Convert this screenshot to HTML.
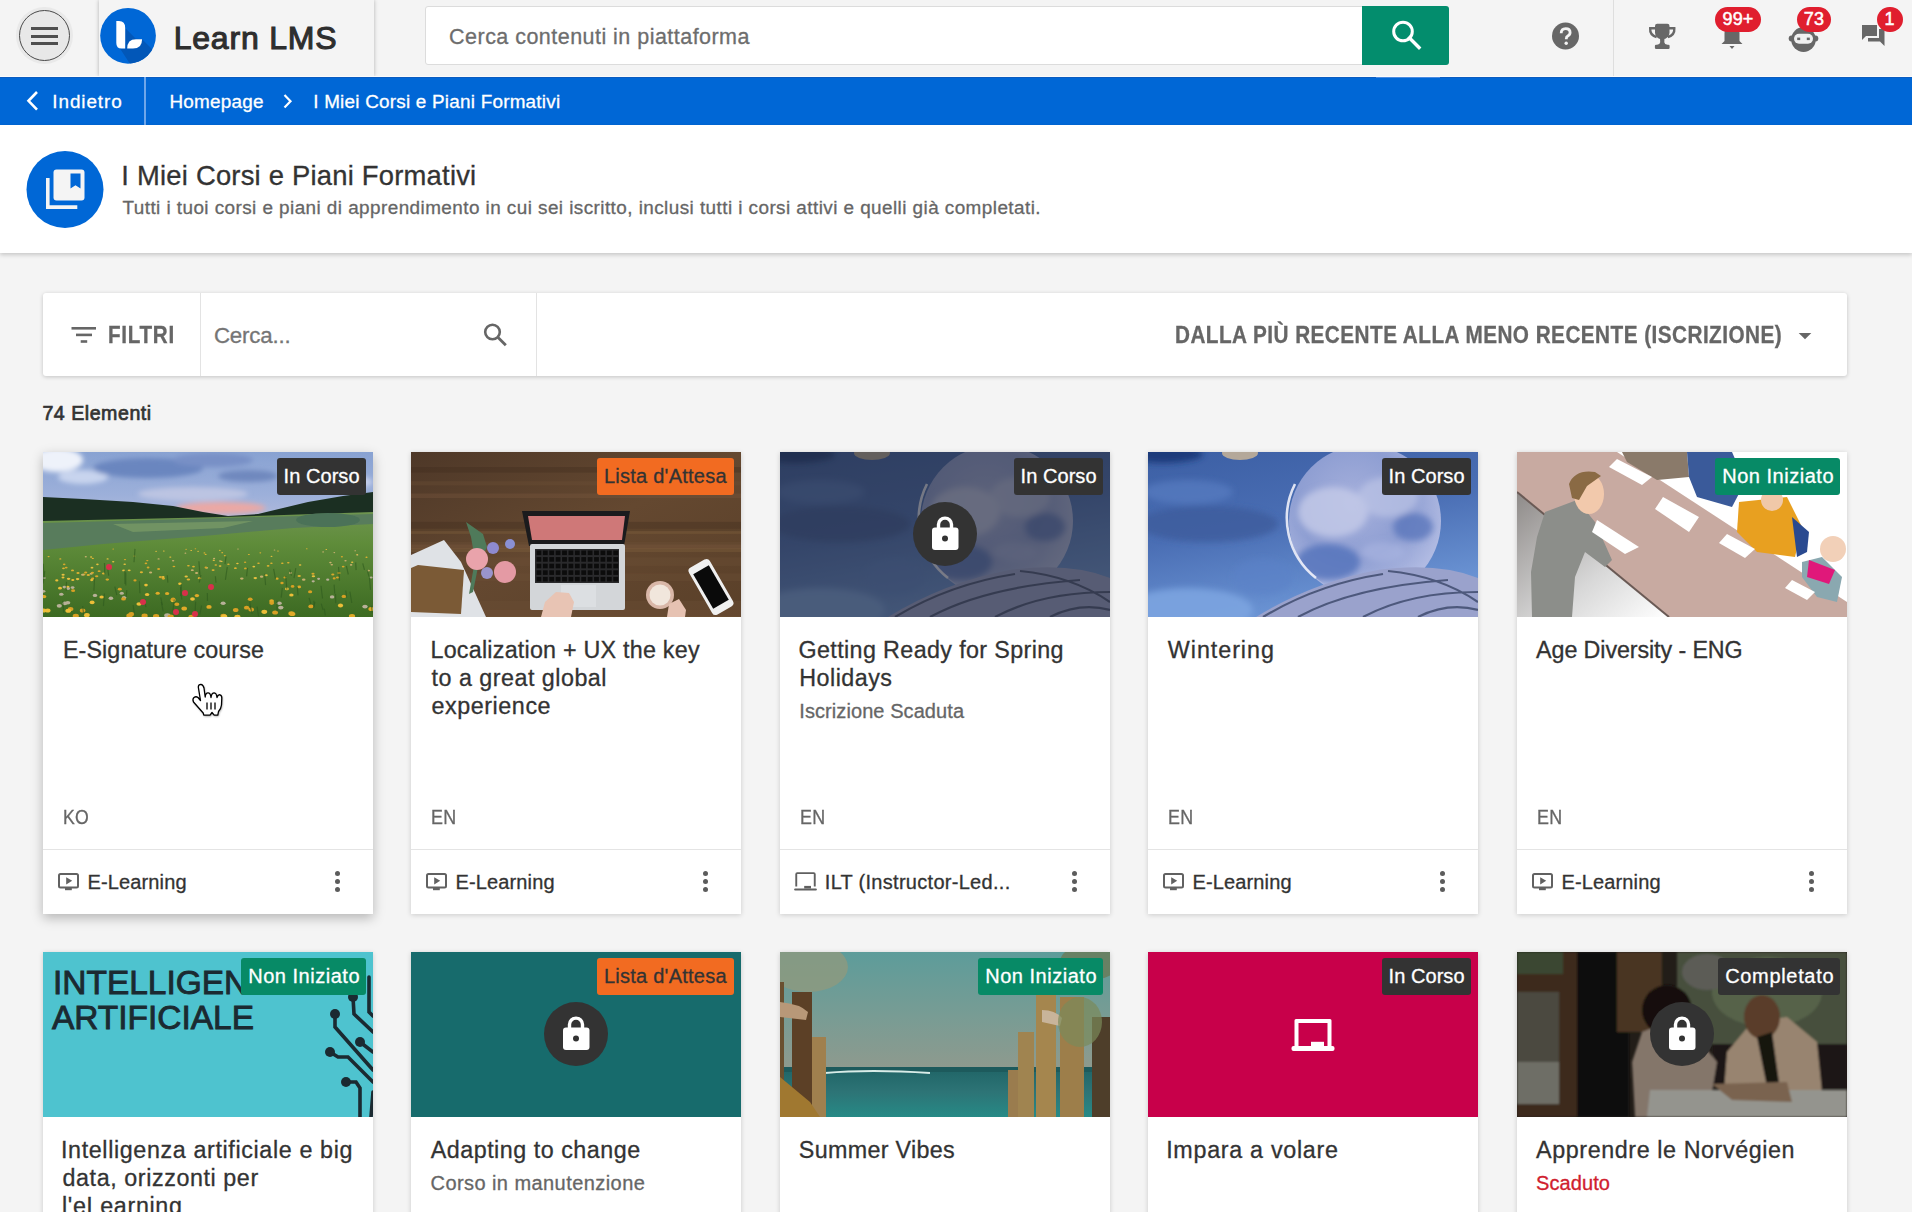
<!DOCTYPE html>
<html><head><meta charset="utf-8"><title>I Miei Corsi e Piani Formativi</title>
<style>
*{box-sizing:border-box;margin:0;padding:0}
html,body{width:1912px;height:1212px;overflow:hidden;background:#f4f4f4;font-family:"Liberation Sans", sans-serif;color:#333}
.abs{position:absolute}
.t{position:absolute;white-space:nowrap;line-height:1;-webkit-text-stroke-width:0.3px}
#hdr{position:absolute;left:0;top:0;width:1912px;height:77px;background:#f4f4f4}
#crumb{position:absolute;left:0;top:77px;width:1912px;height:48px;background:#0067d6}
#phead{position:absolute;left:0;top:125px;width:1912px;height:128px;background:#fff;box-shadow:0 2px 4px rgba(0,0,0,.18)}
#fbar{position:absolute;left:43px;top:293px;width:1804px;height:83px;background:#fff;border-radius:3px;box-shadow:0 1px 4px rgba(0,0,0,.2)}
.card{position:absolute;width:330px;height:462px;background:#fff;box-shadow:0 1px 5px rgba(0,0,0,.17)}
.card .img{position:absolute;left:0;top:0;width:330px;height:165px;overflow:hidden}
.card .img svg{position:absolute;left:0;top:0}
.badge{position:absolute;top:6px;right:6.6px;height:37px;border-radius:3px}
.b-dark{background:#333}
.b-green{background:#078a66}
.b-orange{background:#f26b21;color:#333}
.ttl{position:absolute;left:19px;top:184px;font-size:22px;line-height:28px;letter-spacing:.75px;color:#333;white-space:nowrap}
.sub{position:absolute;left:19px;font-size:18px;line-height:22px;letter-spacing:.7px;color:#666;white-space:nowrap}
.lang{position:absolute;left:19px;top:355px;font-size:18px;line-height:22px;letter-spacing:.6px;color:#666}
.div{position:absolute;left:0;top:397px;width:330px;height:1px;background:#e4e4e4}
.ftxt{position:absolute;left:45px;top:419px;font-size:19px;line-height:22px;letter-spacing:.45px;color:#333;white-space:nowrap}
.ficon{position:absolute;left:15px;top:421px}
.dots{position:absolute;left:292px;top:419px;width:5px;height:21px}
.dots i{position:absolute;left:0;width:5px;height:5px;border-radius:50%;background:#5c5c5c}
.lockc{position:absolute;left:133px;top:50px;width:64px;height:64px;border-radius:50%;background:#333}
</style></head><body>
<div id="hdr"><div class="abs" style="left:16px;top:7px;width:57px;height:57px;border-radius:50%;background:#e9e9e9"></div><div class="abs" style="left:19px;top:10px;width:51px;height:51px;border-radius:50%;background:#e8e8e8;border:1.3px solid #4a4a4a"></div><div class="abs" style="left:31px;top:27.3px;width:27px;height:2.7px;background:#4f4f4f"></div><div class="abs" style="left:31px;top:34.9px;width:27px;height:2.7px;background:#4f4f4f"></div><div class="abs" style="left:31px;top:42.4px;width:27px;height:2.7px;background:#4f4f4f"></div><div class="abs" style="left:99px;top:0;width:275px;height:76px;background:#f4f4f4;box-shadow:0 0 4px rgba(0,0,0,.28)"></div><svg class="abs" style="left:98px;top:6px" width="60" height="60" viewBox="0 0 60 60">
<defs><clipPath id="lc"><circle cx="30.05" cy="29.85" r="27.85"/></clipPath></defs>
<circle cx="30.05" cy="29.85" r="27.85" fill="#0067d6"/>
<g clip-path="url(#lc)"><path d="M27.2 22 L37.5 32.5 L44.1 33.2 L62 51 L50 64 L36 64 L22 42.6 L27.2 42.6Z" fill="#0257b8"/></g>
<path d="M18.3 15.1 H21 Q27.2 15.1 27.2 22 V42.6 H23.5 Q18.3 42.6 18.3 37 Z" fill="#fff"/>
<path d="M29.2 42.6 Q29.2 33.2 38 33.2 H44.1 Q44.1 42.6 35 42.6 Z" fill="#fff"/>
</svg><div class="t" style="left:173.70px;top:22.41px;font-size:32px;font-weight:400;color:#2e2e2e;letter-spacing:0.789px;-webkit-text-stroke:1.1px #2e2e2e;">Learn LMS</div><div class="abs" style="left:425px;top:6px;width:940px;height:59px;background:#fff;border:1px solid #dcdcdc;border-radius:3px"></div><div class="t" style="left:449.10px;top:26.80px;font-size:21.5px;font-weight:400;color:#6d6d6d;letter-spacing:0.467px;">Cerca contenuti in piattaforma</div><div class="abs" style="left:1362px;top:6px;width:87px;height:59px;background:#038d6d;border-radius:0 3px 3px 0"></div><svg class="abs" style="left:1388px;top:18px" width="36" height="34" viewBox="0 0 36 34">
<circle cx="15" cy="13.5" r="9.3" fill="none" stroke="#fff" stroke-width="3"/>
<path d="M21.5 20 L31 29.5" stroke="#fff" stroke-width="3.4" stroke-linecap="square"/></svg><svg class="abs" style="left:1551px;top:22px" width="29" height="29" viewBox="0 0 29 29">
<circle cx="14.5" cy="14" r="13.5" fill="#676767"/>
<path d="M10.2 11.2 q0 -4.6 4.5 -4.6 q4.4 0 4.4 4 q0 2.3 -2.3 3.5 q-1.5 .8 -1.5 2.6 v.6" fill="none" stroke="#f4f4f4" stroke-width="2.8"/>
<circle cx="15.2" cy="21.3" r="1.7" fill="#f4f4f4"/></svg><div class="abs" style="left:1613px;top:0;width:1px;height:77px;background:#dedede"></div><svg class="abs" style="left:1648px;top:23px" width="29" height="27" viewBox="0 0 29 27">
<path d="M7 3 q0 -2.2 2.2 -2.2 h10.1 q2.2 0 2.2 2.2 v6.5 q0 6.2 -7.25 6.8 q-7.25 -0.6 -7.25 -6.8 Z" fill="#676767"/>
<path d="M7.5 5.3 h-5.3 q-0.6 6.6 6.4 8.8" fill="none" stroke="#676767" stroke-width="2.4"/>
<path d="M21 5.3 h5.3 q0.6 6.6 -6.4 8.8" fill="none" stroke="#676767" stroke-width="2.4"/>
<path d="M12 15 h4.5 l-0.2 4.2 q0.2 2.3 3.2 2.8 h-10.5 q3 -0.5 3.2 -2.8Z" fill="#676767"/>
<rect x="6.9" y="21.8" width="14.7" height="4.2" rx="1.2" fill="#676767"/></svg><svg class="abs" style="left:1719px;top:22px" width="26" height="28" viewBox="0 0 26 28">
<path d="M13 2 q7.5 0 7.5 9 v8 l3 3 h-21 l3 -3 v-8 q0 -9 7.5 -9Z" fill="#676767"/>
<path d="M10.5 24 h5 l-2.5 3Z" fill="#676767"/></svg><svg class="abs" style="left:1787px;top:25px" width="33" height="28" viewBox="0 0 33 28">
<ellipse cx="16.5" cy="14.5" rx="12.3" ry="12.5" fill="#676767"/>
<ellipse cx="4.3" cy="13.5" rx="2.6" ry="3" fill="#676767"/>
<ellipse cx="28.7" cy="13.5" rx="2.6" ry="3" fill="#676767"/>
<rect x="7" y="8.8" width="19" height="10" rx="5" fill="#f0f0f0"/>
<rect x="10.2" y="12.6" width="3" height="2.5" fill="#676767"/><rect x="19.8" y="12.6" width="3" height="2.5" fill="#676767"/></svg><svg class="abs" style="left:1861px;top:23px" width="25" height="25" viewBox="0 0 25 25">
<path d="M1 2 h15 v11 h-11 l-4 4Z" fill="#676767"/>
<path d="M18 6 h5.5 v17 l-4.5 -4.5 h-12 v-3.5 h11Z" fill="#676767"/></svg><div class="abs" style="left:1715px;top:7px;width:46px;height:25px;border-radius:12.5px;background:#e01e2e;color:#fff;font-size:18px;line-height:25px;text-align:center;letter-spacing:.2px;-webkit-text-stroke:0.5px #fff">99+</div><div class="abs" style="left:1797px;top:7px;width:34px;height:25px;border-radius:12.5px;background:#e01e2e;color:#fff;font-size:18px;line-height:25px;text-align:center;letter-spacing:.2px;-webkit-text-stroke:0.5px #fff">73</div><div class="abs" style="left:1876.5px;top:7px;width:26px;height:25px;border-radius:12.5px;background:#e01e2e;color:#fff;font-size:18px;line-height:25px;text-align:center;letter-spacing:.2px;-webkit-text-stroke:0.5px #fff">1</div><div class="abs" style="left:0;top:76px;width:1912px;height:1px;background:#fbfbfb"></div></div><div id="crumb"><div class="abs" style="left:0;top:0;width:1912px;height:1px;background:#0b5cc0"></div><div class="abs" style="left:1376px;top:0;width:64px;height:1px;background:#4a8ae0"></div><svg class="abs" style="left:24px;top:13px" width="18" height="22" viewBox="0 0 18 22"><path d="M13 2 L4.5 10.8 L13 19.6" fill="none" stroke="#fff" stroke-width="2.6"/></svg><div class="abs" style="left:144px;top:0;width:2px;height:48px;background:#6ea6ea"></div><svg class="abs" style="left:280px;top:15px" width="16" height="20" viewBox="0 0 16 20"><path d="M4.5 3 L10.5 9.2 L4.5 15.4" fill="none" stroke="#fff" stroke-width="2.2"/></svg></div><div class="t" style="left:52.30px;top:92.60px;font-size:18.9px;font-weight:400;color:#fff;letter-spacing:0.914px;-webkit-text-stroke:0.3px #fff;">Indietro</div><div class="t" style="left:169.40px;top:92.60px;font-size:18.9px;font-weight:400;color:#fff;letter-spacing:0.256px;-webkit-text-stroke:0.3px #fff;">Homepage</div><div class="t" style="left:313.20px;top:92.60px;font-size:18.9px;font-weight:400;color:#fff;letter-spacing:0.225px;-webkit-text-stroke:0.3px #fff;">I Miei Corsi e Piani Formativi</div><div id="phead"></div><svg class="abs" style="left:25.5px;top:151px" width="78" height="78" viewBox="0 0 78 78">
<circle cx="39" cy="38.5" r="38.5" fill="#0067d6"/>
<path d="M20 27 h3.6 v27.3 h27.7 v3.6 h-31.3Z" fill="#f4f4f4"/>
<rect x="27.5" y="18.5" width="31" height="31" rx="3" fill="#f4f4f4"/>
<path d="M44.5 22.5 h10 v15 l-5 -3.2 l-5 3.2Z" fill="#0067d6"/>
</svg><div class="t" style="left:121.30px;top:161.91px;font-size:27.4px;font-weight:400;color:#333;letter-spacing:0.219px;">I Miei Corsi e Piani Formativi</div><div class="t" style="left:122.50px;top:198.60px;font-size:18.9px;font-weight:400;color:#666;letter-spacing:0.440px;">Tutti i tuoi corsi e piani di apprendimento in cui sei iscritto, inclusi tutti i corsi attivi e quelli già completati.</div><div id="fbar"><div class="abs" style="left:157px;top:0;width:1px;height:83px;background:#e3e3e3"></div><div class="abs" style="left:493px;top:0;width:1px;height:83px;background:#e3e3e3"></div></div><svg class="abs" style="left:71px;top:326px" width="26" height="18" viewBox="0 0 26 18">
<rect x="0.5" y="1" width="24.5" height="2.6" fill="#666"/><rect x="5" y="7.6" width="16" height="2.6" fill="#666"/><rect x="9.7" y="14.2" width="6.5" height="2.6" fill="#666"/></svg><div class="t" style="left:107.71px;top:323.76px;font-size:23.2px;font-weight:700;color:#666;letter-spacing:0.800px;transform:scaleX(0.8894);transform-origin:0 0;">FILTRI</div><div class="t" style="left:213.90px;top:324.52px;font-size:22.3px;font-weight:400;color:#757575;letter-spacing:-0.195px;">Cerca...</div><svg class="abs" style="left:482px;top:322px" width="28" height="26" viewBox="0 0 28 26">
<circle cx="10.5" cy="10" r="7.3" fill="none" stroke="#666" stroke-width="2.6"/>
<path d="M15.8 15.3 L23.8 23.3" stroke="#666" stroke-width="2.8"/></svg><div class="t" style="left:1174.91px;top:323.76px;font-size:23.2px;font-weight:700;color:#666;letter-spacing:0.500px;transform:scaleX(0.8949);transform-origin:0 0;">DALLA PIÙ RECENTE ALLA MENO RECENTE (ISCRIZIONE)</div><svg class="abs" style="left:1798px;top:331px" width="16" height="10" viewBox="0 0 16 10"><path d="M0.7 2 h12.6 l-6.3 6.3Z" fill="#666"/></svg><div class="t" style="left:42.40px;top:404.41px;font-size:19.6px;font-weight:400;color:#333;letter-spacing:0.528px;-webkit-text-stroke:0.7px #333;">74 Elementi</div><div class="card" style="left:43px;top:452px;box-shadow:0 4px 11px rgba(0,0,0,.26);"><div class="img"><svg width="330" height="165" viewBox="0 0 330 165"><defs><linearGradient id="m_sky" x1="0" y1="0" x2="0" y2="1"><stop offset="0" stop-color="#88a2d2"/><stop offset=".6" stop-color="#9db0da"/><stop offset="1" stop-color="#b4bcdc"/></linearGradient>
<linearGradient id="m_fg" x1="0" y1="0" x2="0" y2="1"><stop offset="0" stop-color="#6e9450"/><stop offset=".3" stop-color="#5f8c3a"/><stop offset="1" stop-color="#3c6a22"/></linearGradient>
<filter id="m_bl" x="-10%" y="-10%" width="120%" height="120%"><feGaussianBlur stdDeviation="2.5"/></filter></defs><rect width="330" height="72" fill="url(#m_sky)"/><g filter="url(#m_bl)"><ellipse cx="14" cy="8" rx="26" ry="12" fill="#eef2fa"/><ellipse cx="40" cy="25" rx="25" ry="7" fill="#c8d4ee"/><ellipse cx="105" cy="16" rx="55" ry="10" fill="#6b86bf"/><ellipse cx="170" cy="8" rx="40" ry="7" fill="#7890c6"/><ellipse cx="205" cy="24" rx="30" ry="6" fill="#6f88be"/><ellipse cx="290" cy="30" rx="40" ry="8" fill="#c6d0ec"/><ellipse cx="150" cy="42" rx="55" ry="7" fill="#bcc4e2"/><ellipse cx="178" cy="56" rx="45" ry="6" fill="#eba8a4"/></g><path d="M0 45 L40 47 L90 50 L130 54 L160 60 L185 64 L215 62 L240 56 L265 50 L300 44 L330 40 L330 68 L260 68 L180 69 L0 73Z" fill="#1b2f22"/><path d="M0 69 L180 65 L330 60 L330 165 L0 165Z" fill="url(#m_fg)"/><path d="M0 71 L180 66 L330 62 L330 72 L250 76 L160 84 L60 92 L0 98Z" fill="#587c5c"/><path d="M70 72 L210 69 L180 76 L90 80Z" fill="#7c9c66" opacity=".7"/><ellipse cx="285" cy="68" rx="32" ry="7" fill="#4b7258"/><ellipse cx="49.8" cy="106.4" rx="1.1" ry="0.7" fill="#e0b232"/><ellipse cx="176.8" cy="98.3" rx="0.9" ry="0.5" fill="#e8c040"/><ellipse cx="300.2" cy="114.6" rx="1.4" ry="0.9" fill="#d8a82c"/><ellipse cx="143.1" cy="97.2" rx="0.8" ry="0.5" fill="#e0b232"/><ellipse cx="181.8" cy="103.7" rx="1.0" ry="0.6" fill="#e0b232"/><ellipse cx="40.9" cy="122.5" rx="1.6" ry="1.0" fill="#d8a82c"/><ellipse cx="192.4" cy="116.2" rx="1.4" ry="0.9" fill="#e0b232"/><ellipse cx="130.9" cy="114.5" rx="1.4" ry="0.8" fill="#d8a82c"/><ellipse cx="283.3" cy="97.5" rx="0.8" ry="0.5" fill="#e8c040"/><ellipse cx="178.4" cy="109.4" rx="1.2" ry="0.7" fill="#e8c040"/><ellipse cx="225.1" cy="113.9" rx="1.4" ry="0.8" fill="#e0b232"/><ellipse cx="210.8" cy="114.6" rx="1.4" ry="0.9" fill="#e8c040"/><ellipse cx="235.0" cy="99.1" rx="0.9" ry="0.5" fill="#e0b232"/><ellipse cx="163.8" cy="115.8" rx="1.4" ry="0.9" fill="#c8b070"/><ellipse cx="153.6" cy="120.9" rx="1.6" ry="1.0" fill="#c8b070"/><ellipse cx="82.0" cy="107.6" rx="1.2" ry="0.7" fill="#d8a82c"/><ellipse cx="80.6" cy="118.4" rx="1.5" ry="0.9" fill="#e8c040"/><ellipse cx="288.8" cy="112.8" rx="1.3" ry="0.8" fill="#c8b070"/><ellipse cx="323.5" cy="105.2" rx="1.1" ry="0.7" fill="#e0b232"/><ellipse cx="54.4" cy="112.4" rx="1.3" ry="0.8" fill="#e8c040"/><ellipse cx="161.4" cy="100.9" rx="0.9" ry="0.6" fill="#e0b232"/><ellipse cx="25.6" cy="126.8" rx="1.8" ry="1.1" fill="#e8c040"/><ellipse cx="115.6" cy="106.9" rx="1.1" ry="0.7" fill="#c8b070"/><ellipse cx="150.5" cy="114.6" rx="1.4" ry="0.9" fill="#e0b232"/><ellipse cx="156.5" cy="126.2" rx="1.8" ry="1.1" fill="#e0b232"/><ellipse cx="231.5" cy="97.9" rx="0.8" ry="0.5" fill="#c8b070"/><ellipse cx="127.3" cy="105.1" rx="1.1" ry="0.7" fill="#e8c040"/><ellipse cx="152.4" cy="96.7" rx="0.8" ry="0.5" fill="#d8a82c"/><ellipse cx="162.9" cy="115.5" rx="1.4" ry="0.9" fill="#d8a82c"/><ellipse cx="42.7" cy="120.6" rx="1.6" ry="1.0" fill="#d8a82c"/><ellipse cx="302.5" cy="108.7" rx="1.2" ry="0.7" fill="#c8b070"/><ellipse cx="148.2" cy="98.6" rx="0.9" ry="0.5" fill="#e8c040"/><ellipse cx="270.4" cy="124.3" rx="1.7" ry="1.0" fill="#e8c040"/><ellipse cx="325.5" cy="118.6" rx="1.5" ry="0.9" fill="#c8b070"/><ellipse cx="49.8" cy="126.6" rx="1.8" ry="1.1" fill="#d8a82c"/><ellipse cx="217.3" cy="100.8" rx="0.9" ry="0.6" fill="#e0b232"/><ellipse cx="194.4" cy="111.5" rx="1.3" ry="0.8" fill="#e8c040"/><ellipse cx="48.1" cy="105.0" rx="1.1" ry="0.7" fill="#e8c040"/><ellipse cx="105.1" cy="115.5" rx="1.4" ry="0.9" fill="#d8a82c"/><ellipse cx="170.1" cy="118.1" rx="1.5" ry="0.9" fill="#e0b232"/><ellipse cx="287.4" cy="110.6" rx="1.3" ry="0.8" fill="#c8b070"/><ellipse cx="130.1" cy="108.7" rx="1.2" ry="0.7" fill="#c8b070"/><ellipse cx="20.5" cy="116.3" rx="1.4" ry="0.9" fill="#e0b232"/><ellipse cx="145.4" cy="127.5" rx="1.8" ry="1.1" fill="#e0b232"/><ellipse cx="17.3" cy="106.9" rx="1.1" ry="0.7" fill="#e0b232"/><ellipse cx="177.1" cy="114.1" rx="1.4" ry="0.8" fill="#e8c040"/><ellipse cx="23.2" cy="115.6" rx="1.4" ry="0.9" fill="#d8a82c"/><ellipse cx="49.0" cy="115.7" rx="1.4" ry="0.9" fill="#e8c040"/><ellipse cx="198.8" cy="126.6" rx="1.8" ry="1.1" fill="#c8b070"/><ellipse cx="280.1" cy="99.9" rx="0.9" ry="0.6" fill="#c8b070"/><ellipse cx="102.9" cy="111.4" rx="1.3" ry="0.8" fill="#d8a82c"/><ellipse cx="113.1" cy="99.3" rx="0.9" ry="0.5" fill="#e8c040"/><ellipse cx="228.4" cy="111.3" rx="1.3" ry="0.8" fill="#e0b232"/><ellipse cx="314.2" cy="102.6" rx="1.0" ry="0.6" fill="#e8c040"/><ellipse cx="179.2" cy="100.7" rx="0.9" ry="0.6" fill="#e0b232"/><ellipse cx="98.4" cy="120.3" rx="1.6" ry="1.0" fill="#e0b232"/><ellipse cx="86.2" cy="118.3" rx="1.5" ry="0.9" fill="#e8c040"/><ellipse cx="117.4" cy="125.1" rx="1.7" ry="1.1" fill="#d8a82c"/><ellipse cx="257.1" cy="113.0" rx="1.3" ry="0.8" fill="#e8c040"/><ellipse cx="202.4" cy="116.4" rx="1.4" ry="0.9" fill="#d8a82c"/><ellipse cx="270.0" cy="121.8" rx="1.6" ry="1.0" fill="#d8a82c"/><ellipse cx="162.6" cy="102.4" rx="1.0" ry="0.6" fill="#e0b232"/><ellipse cx="260.7" cy="127.7" rx="1.8" ry="1.1" fill="#c8b070"/><ellipse cx="228.5" cy="104.3" rx="1.0" ry="0.6" fill="#e8c040"/><ellipse cx="309.2" cy="110.3" rx="1.2" ry="0.8" fill="#e8c040"/><ellipse cx="120.3" cy="126.6" rx="1.8" ry="1.1" fill="#d8a82c"/><ellipse cx="155.1" cy="99.3" rx="0.9" ry="0.5" fill="#e8c040"/><ellipse cx="205.9" cy="102.5" rx="1.0" ry="0.6" fill="#e0b232"/><ellipse cx="215.5" cy="111.3" rx="1.3" ry="0.8" fill="#e0b232"/><ellipse cx="39.6" cy="122.7" rx="1.6" ry="1.0" fill="#c8b070"/><ellipse cx="247.5" cy="121.0" rx="1.6" ry="1.0" fill="#c8b070"/><ellipse cx="143.2" cy="124.4" rx="1.7" ry="1.0" fill="#e8c040"/><ellipse cx="312.2" cy="98.8" rx="0.9" ry="0.5" fill="#c8b070"/><ellipse cx="245.3" cy="110.8" rx="1.3" ry="0.8" fill="#e0b232"/><ellipse cx="56.1" cy="119.2" rx="1.5" ry="0.9" fill="#d8a82c"/><ellipse cx="195.0" cy="96.9" rx="0.8" ry="0.5" fill="#c8b070"/><ellipse cx="48.2" cy="121.8" rx="1.6" ry="1.0" fill="#c8b070"/><ellipse cx="115.6" cy="117.0" rx="1.5" ry="0.9" fill="#d8a82c"/><ellipse cx="263.8" cy="96.7" rx="0.8" ry="0.5" fill="#e0b232"/><ellipse cx="308.1" cy="112.9" rx="1.3" ry="0.8" fill="#c8b070"/><ellipse cx="64.3" cy="127.6" rx="1.8" ry="1.1" fill="#d8a82c"/><ellipse cx="70.2" cy="96.9" rx="0.8" ry="0.5" fill="#d8a82c"/><ellipse cx="107.6" cy="120.4" rx="1.6" ry="1.0" fill="#c8b070"/><ellipse cx="20.1" cy="122.7" rx="1.6" ry="1.0" fill="#e8c040"/><ellipse cx="218.6" cy="124.7" rx="1.7" ry="1.1" fill="#c8b070"/><ellipse cx="289.8" cy="122.5" rx="1.6" ry="1.0" fill="#d8a82c"/><ellipse cx="172.8" cy="113.0" rx="1.3" ry="0.8" fill="#e0b232"/><ellipse cx="256.2" cy="123.9" rx="1.7" ry="1.0" fill="#e0b232"/><ellipse cx="49.4" cy="120.8" rx="1.6" ry="1.0" fill="#d8a82c"/><ellipse cx="239.3" cy="111.2" rx="1.3" ry="0.8" fill="#e0b232"/><ellipse cx="171.1" cy="106.4" rx="1.1" ry="0.7" fill="#c8b070"/><ellipse cx="35.0" cy="121.1" rx="1.6" ry="1.0" fill="#e0b232"/><ellipse cx="91.4" cy="104.0" rx="1.0" ry="0.6" fill="#e0b232"/><ellipse cx="185.4" cy="112.2" rx="1.3" ry="0.8" fill="#e0b232"/><ellipse cx="202.1" cy="110.2" rx="1.2" ry="0.8" fill="#d8a82c"/><ellipse cx="149.3" cy="118.2" rx="1.5" ry="0.9" fill="#c8b070"/><ellipse cx="81.7" cy="112.2" rx="1.3" ry="0.8" fill="#e8c040"/><ellipse cx="294.6" cy="125.5" rx="1.7" ry="1.1" fill="#d8a82c"/><ellipse cx="45.3" cy="122.9" rx="1.7" ry="1.0" fill="#e0b232"/><ellipse cx="104.3" cy="108.6" rx="1.2" ry="0.7" fill="#d8a82c"/><ellipse cx="70.2" cy="109.7" rx="1.2" ry="0.8" fill="#e8c040"/><ellipse cx="296.0" cy="121.1" rx="1.6" ry="1.0" fill="#d8a82c"/><ellipse cx="212.3" cy="126.1" rx="1.8" ry="1.1" fill="#e8c040"/><ellipse cx="291.3" cy="100.6" rx="0.9" ry="0.6" fill="#c8b070"/><ellipse cx="314.3" cy="103.0" rx="1.0" ry="0.6" fill="#c8b070"/><ellipse cx="53.7" cy="124.3" rx="1.7" ry="1.0" fill="#d8a82c"/><ellipse cx="142.4" cy="101.2" rx="0.9" ry="0.6" fill="#c8b070"/><ellipse cx="64.6" cy="106.9" rx="1.1" ry="0.7" fill="#e8c040"/><ellipse cx="120.8" cy="99.0" rx="0.9" ry="0.5" fill="#e8c040"/><ellipse cx="145.4" cy="113.7" rx="1.4" ry="0.8" fill="#e0b232"/><ellipse cx="170.8" cy="108.3" rx="1.2" ry="0.7" fill="#e8c040"/><ellipse cx="21.2" cy="112.4" rx="1.3" ry="0.8" fill="#d8a82c"/><ellipse cx="34.6" cy="127.1" rx="1.8" ry="1.1" fill="#e8c040"/><ellipse cx="298.9" cy="104.7" rx="1.1" ry="0.7" fill="#d8a82c"/><ellipse cx="42.8" cy="104.7" rx="1.1" ry="0.7" fill="#c8b070"/><ellipse cx="223.1" cy="123.2" rx="1.7" ry="1.0" fill="#e8c040"/><ellipse cx="177.1" cy="109.0" rx="1.2" ry="0.7" fill="#c8b070"/><ellipse cx="29.5" cy="118.4" rx="1.5" ry="0.9" fill="#e0b232"/><ellipse cx="60.5" cy="121.6" rx="1.6" ry="1.0" fill="#e0b232"/><ellipse cx="5.6" cy="104.6" rx="1.1" ry="0.7" fill="#e0b232"/><ellipse cx="27.6" cy="157.1" rx="2.8" ry="2.0" fill="#d8a024"/><ellipse cx="284.7" cy="127.7" rx="1.6" ry="1.1" fill="#b8b098"/><ellipse cx="328.1" cy="125.5" rx="1.5" ry="1.0" fill="#b8b098"/><ellipse cx="88.4" cy="162.1" rx="3.0" ry="2.1" fill="#d8a024"/><ellipse cx="234.1" cy="126.7" rx="1.5" ry="1.1" fill="#e0aa28"/><ellipse cx="86.4" cy="163.8" rx="3.1" ry="2.2" fill="#d8a024"/><ellipse cx="103.0" cy="133.1" rx="1.8" ry="1.3" fill="#ecbe38"/><ellipse cx="67.9" cy="146.2" rx="2.3" ry="1.7" fill="#b8b098"/><ellipse cx="58.7" cy="145.0" rx="2.3" ry="1.6" fill="#ecbe38"/><ellipse cx="328.2" cy="157.1" rx="2.8" ry="2.0" fill="#e0aa28"/><ellipse cx="241.9" cy="125.6" rx="1.5" ry="1.0" fill="#d8a024"/><ellipse cx="81.1" cy="145.6" rx="2.3" ry="1.6" fill="#b8b098"/><ellipse cx="270.2" cy="129.3" rx="1.6" ry="1.1" fill="#b8b098"/><ellipse cx="180.1" cy="151.3" rx="2.5" ry="1.8" fill="#b8b098"/><ellipse cx="101.6" cy="163.8" rx="3.1" ry="2.2" fill="#d8a024"/><ellipse cx="113.1" cy="164.3" rx="3.1" ry="2.2" fill="#d8a024"/><ellipse cx="114.7" cy="141.2" rx="2.1" ry="1.5" fill="#e0aa28"/><ellipse cx="4.7" cy="158.5" rx="2.8" ry="2.0" fill="#ecbe38"/><ellipse cx="18.3" cy="142.2" rx="2.2" ry="1.5" fill="#b8b098"/><ellipse cx="221.3" cy="159.8" rx="2.9" ry="2.1" fill="#ecbe38"/><ellipse cx="228.6" cy="149.0" rx="2.4" ry="1.7" fill="#e0aa28"/><ellipse cx="52.0" cy="143.4" rx="2.2" ry="1.6" fill="#b8b098"/><ellipse cx="120.2" cy="125.1" rx="1.4" ry="1.0" fill="#ecbe38"/><ellipse cx="180.5" cy="163.9" rx="3.1" ry="2.2" fill="#d8a024"/><ellipse cx="291.2" cy="126.4" rx="1.5" ry="1.1" fill="#d8a024"/><ellipse cx="0.4" cy="139.3" rx="2.0" ry="1.4" fill="#b8b098"/><ellipse cx="92.0" cy="128.4" rx="1.6" ry="1.1" fill="#d8a024"/><ellipse cx="256.2" cy="134.9" rx="1.9" ry="1.3" fill="#e0aa28"/><ellipse cx="29.6" cy="135.6" rx="1.9" ry="1.3" fill="#b8b098"/><ellipse cx="130.0" cy="148.5" rx="2.4" ry="1.7" fill="#ecbe38"/><ellipse cx="76.8" cy="137.2" rx="2.0" ry="1.4" fill="#d8a024"/><ellipse cx="236.3" cy="151.3" rx="2.5" ry="1.8" fill="#b8b098"/><ellipse cx="237.8" cy="155.6" rx="2.7" ry="1.9" fill="#b8b098"/><ellipse cx="239.0" cy="131.0" rx="1.7" ry="1.2" fill="#d8a024"/><ellipse cx="275.6" cy="126.8" rx="1.5" ry="1.1" fill="#b8b098"/><ellipse cx="268.0" cy="154.4" rx="2.7" ry="1.9" fill="#d8a024"/><ellipse cx="248.4" cy="161.4" rx="3.0" ry="2.1" fill="#e0aa28"/><ellipse cx="192.7" cy="158.1" rx="2.8" ry="2.0" fill="#d8a024"/><ellipse cx="13.8" cy="128.4" rx="1.6" ry="1.1" fill="#ecbe38"/><ellipse cx="124.3" cy="163.4" rx="3.1" ry="2.2" fill="#b8b098"/><ellipse cx="207.2" cy="147.3" rx="2.4" ry="1.7" fill="#d8a024"/><ellipse cx="1.1" cy="144.6" rx="2.3" ry="1.6" fill="#e0aa28"/><ellipse cx="166.0" cy="154.9" rx="2.7" ry="1.9" fill="#e0aa28"/><ellipse cx="21.8" cy="151.4" rx="2.5" ry="1.8" fill="#b8b098"/><ellipse cx="24.6" cy="135.1" rx="1.9" ry="1.3" fill="#ecbe38"/><ellipse cx="249.6" cy="134.4" rx="1.8" ry="1.3" fill="#d8a024"/><ellipse cx="322.0" cy="154.6" rx="2.7" ry="1.9" fill="#b8b098"/><ellipse cx="25.3" cy="158.8" rx="2.9" ry="2.0" fill="#ecbe38"/><ellipse cx="203.6" cy="155.7" rx="2.7" ry="1.9" fill="#d8a024"/><ellipse cx="48.7" cy="128.1" rx="1.6" ry="1.1" fill="#ecbe38"/><ellipse cx="228.7" cy="151.1" rx="2.5" ry="1.8" fill="#d8a024"/><ellipse cx="20.0" cy="125.5" rx="1.5" ry="1.0" fill="#ecbe38"/><ellipse cx="32.8" cy="163.9" rx="3.1" ry="2.2" fill="#d8a024"/><ellipse cx="96.0" cy="152.0" rx="2.6" ry="1.8" fill="#ecbe38"/><ellipse cx="153.9" cy="143.6" rx="2.2" ry="1.6" fill="#e0aa28"/><ellipse cx="181.2" cy="164.7" rx="3.1" ry="2.2" fill="#ecbe38"/><ellipse cx="309.0" cy="164.1" rx="3.1" ry="2.2" fill="#e0aa28"/><ellipse cx="25.2" cy="136.6" rx="1.9" ry="1.4" fill="#b8b098"/><ellipse cx="127.7" cy="164.8" rx="3.1" ry="2.2" fill="#d8a024"/><ellipse cx="29.8" cy="128.0" rx="1.6" ry="1.1" fill="#ecbe38"/><ellipse cx="43.8" cy="163.1" rx="3.0" ry="2.2" fill="#ecbe38"/><ellipse cx="232.1" cy="160.5" rx="2.9" ry="2.1" fill="#d8a024"/><ellipse cx="289.1" cy="144.9" rx="2.3" ry="1.6" fill="#b8b098"/><ellipse cx="1.2" cy="126.0" rx="1.5" ry="1.0" fill="#b8b098"/><ellipse cx="133.8" cy="152.3" rx="2.6" ry="1.8" fill="#d8a024"/><ellipse cx="124.1" cy="141.6" rx="2.1" ry="1.5" fill="#e0aa28"/><ellipse cx="0.6" cy="158.6" rx="2.9" ry="2.0" fill="#ecbe38"/><ellipse cx="39.6" cy="158.6" rx="2.8" ry="2.0" fill="#d8a024"/><ellipse cx="297.5" cy="153.5" rx="2.6" ry="1.9" fill="#ecbe38"/><ellipse cx="21.4" cy="135.1" rx="1.9" ry="1.3" fill="#b8b098"/><ellipse cx="194.4" cy="165.0" rx="3.1" ry="2.2" fill="#ecbe38"/><ellipse cx="249.4" cy="162.0" rx="3.0" ry="2.1" fill="#e0aa28"/><ellipse cx="17.0" cy="136.2" rx="1.9" ry="1.4" fill="#ecbe38"/><ellipse cx="49.1" cy="150.4" rx="2.5" ry="1.8" fill="#ecbe38"/><ellipse cx="104.1" cy="142.4" rx="2.2" ry="1.5" fill="#ecbe38"/><ellipse cx="141.2" cy="156.4" rx="2.8" ry="2.0" fill="#e0aa28"/><ellipse cx="208.2" cy="157.5" rx="2.8" ry="2.0" fill="#d8a024"/><ellipse cx="16.3" cy="153.8" rx="2.6" ry="1.9" fill="#b8b098"/><ellipse cx="248.4" cy="143.0" rx="2.2" ry="1.6" fill="#ecbe38"/><ellipse cx="300.9" cy="144.4" rx="2.3" ry="1.6" fill="#d8a024"/><ellipse cx="136.9" cy="131.8" rx="1.7" ry="1.2" fill="#ecbe38"/><ellipse cx="243.9" cy="136.9" rx="1.9" ry="1.4" fill="#ecbe38"/><ellipse cx="78.8" cy="141.2" rx="2.1" ry="1.5" fill="#b8b098"/><ellipse cx="130.1" cy="147.3" rx="2.4" ry="1.7" fill="#d8a024"/><ellipse cx="24.8" cy="150.7" rx="2.5" ry="1.8" fill="#b8b098"/><ellipse cx="149.5" cy="147.0" rx="2.4" ry="1.7" fill="#ecbe38"/><ellipse cx="148.5" cy="164.9" rx="3.1" ry="2.2" fill="#d8a024"/><ellipse cx="80.5" cy="146.9" rx="2.4" ry="1.7" fill="#d8a024"/><ellipse cx="30.1" cy="138.7" rx="2.0" ry="1.4" fill="#d8a024"/><ellipse cx="267.1" cy="139.7" rx="2.1" ry="1.5" fill="#d8a024"/><path d="M292.8 151.2 l-0.3 -9.3" stroke="#2e5a1e" stroke-width="1.2" opacity=".6"/><path d="M173.0 130.7 l-0.6 -6.5" stroke="#2e5a1e" stroke-width="1.2" opacity=".6"/><path d="M91.6 163.2 l-1.5 -10.0" stroke="#2e5a1e" stroke-width="1.2" opacity=".6"/><path d="M207.8 157.5 l-1.1 -8.2" stroke="#2e5a1e" stroke-width="1.2" opacity=".6"/><path d="M82.0 132.0 l-0.2 -13.6" stroke="#2e5a1e" stroke-width="1.2" opacity=".6"/><path d="M280.1 158.0 l-1.9 -6.3" stroke="#2e5a1e" stroke-width="1.2" opacity=".6"/><path d="M234.1 159.3 l-0.1 -10.7" stroke="#2e5a1e" stroke-width="1.2" opacity=".6"/><path d="M0.1 131.5 l1.7 -12.6" stroke="#2e5a1e" stroke-width="1.2" opacity=".6"/><path d="M282.3 163.5 l-1.0 -6.9" stroke="#2e5a1e" stroke-width="1.2" opacity=".6"/><path d="M50.9 138.7 l0.7 -13.5" stroke="#2e5a1e" stroke-width="1.2" opacity=".6"/><path d="M238.2 145.6 l1.1 -9.7" stroke="#2e5a1e" stroke-width="1.2" opacity=".6"/><path d="M182.0 112.2 l1.1 -7.9" stroke="#2e5a1e" stroke-width="1.2" opacity=".6"/><path d="M303.6 145.5 l-0.8 -7.0" stroke="#2e5a1e" stroke-width="1.2" opacity=".6"/><path d="M83.1 145.0 l0.8 -6.9" stroke="#2e5a1e" stroke-width="1.2" opacity=".6"/><path d="M23.2 138.8 l0.3 -9.1" stroke="#2e5a1e" stroke-width="1.2" opacity=".6"/><path d="M73.8 143.1 l-2.0 -8.4" stroke="#2e5a1e" stroke-width="1.2" opacity=".6"/><path d="M152.0 162.7 l0.6 -13.1" stroke="#2e5a1e" stroke-width="1.2" opacity=".6"/><path d="M156.9 122.9 l-1.0 -13.7" stroke="#2e5a1e" stroke-width="1.2" opacity=".6"/><path d="M232.5 126.9 l-1.9 -10.0" stroke="#2e5a1e" stroke-width="1.2" opacity=".6"/><path d="M222.6 133.1 l-1.0 -11.3" stroke="#2e5a1e" stroke-width="1.2" opacity=".6"/><path d="M305.3 122.5 l-1.9 -8.7" stroke="#2e5a1e" stroke-width="1.2" opacity=".6"/><path d="M138.8 147.5 l-1.2 -12.4" stroke="#2e5a1e" stroke-width="1.2" opacity=".6"/><path d="M243.9 137.8 l-1.2 -13.8" stroke="#2e5a1e" stroke-width="1.2" opacity=".6"/><path d="M102.9 155.1 l-1.1 -7.8" stroke="#2e5a1e" stroke-width="1.2" opacity=".6"/><path d="M251.0 126.2 l1.8 -10.0" stroke="#2e5a1e" stroke-width="1.2" opacity=".6"/><path d="M61.8 122.3 l-0.3 -11.3" stroke="#2e5a1e" stroke-width="1.2" opacity=".6"/><path d="M313.1 118.1 l-0.4 -7.7" stroke="#2e5a1e" stroke-width="1.2" opacity=".6"/><path d="M321.5 117.8 l-1.8 -6.5" stroke="#2e5a1e" stroke-width="1.2" opacity=".6"/><path d="M129.8 159.4 l1.5 -11.9" stroke="#2e5a1e" stroke-width="1.2" opacity=".6"/><path d="M329.2 161.2 l-0.7 -7.5" stroke="#2e5a1e" stroke-width="1.2" opacity=".6"/><path d="M308.8 151.0 l-1.9 -11.3" stroke="#2e5a1e" stroke-width="1.2" opacity=".6"/><path d="M124.9 130.6 l-0.7 -7.4" stroke="#2e5a1e" stroke-width="1.2" opacity=".6"/><path d="M0.9 125.4 l-0.6 -13.6" stroke="#2e5a1e" stroke-width="1.2" opacity=".6"/><path d="M40.8 163.0 l-1.2 -8.9" stroke="#2e5a1e" stroke-width="1.2" opacity=".6"/><path d="M271.1 155.2 l-0.3 -6.4" stroke="#2e5a1e" stroke-width="1.2" opacity=".6"/><path d="M156.2 130.5 l1.7 -7.5" stroke="#2e5a1e" stroke-width="1.2" opacity=".6"/><path d="M120.2 159.3 l-1.9 -9.3" stroke="#2e5a1e" stroke-width="1.2" opacity=".6"/><path d="M267.9 152.2 l-1.8 -6.3" stroke="#2e5a1e" stroke-width="1.2" opacity=".6"/><path d="M20.7 160.6 l-1.0 -12.0" stroke="#2e5a1e" stroke-width="1.2" opacity=".6"/><path d="M296.5 128.6 l-0.9 -13.7" stroke="#2e5a1e" stroke-width="1.2" opacity=".6"/><path d="M203.6 124.4 l0.9 -8.5" stroke="#2e5a1e" stroke-width="1.2" opacity=".6"/><path d="M91.0 110.2 l1.0 -13.3" stroke="#2e5a1e" stroke-width="1.2" opacity=".6"/><path d="M209.2 161.9 l-1.9 -7.9" stroke="#2e5a1e" stroke-width="1.2" opacity=".6"/><path d="M156.8 162.6 l1.8 -9.1" stroke="#2e5a1e" stroke-width="1.2" opacity=".6"/><path d="M82.8 133.6 l-0.0 -13.4" stroke="#2e5a1e" stroke-width="1.2" opacity=".6"/><path d="M60.4 154.1 l1.0 -12.6" stroke="#2e5a1e" stroke-width="1.2" opacity=".6"/><path d="M255.0 143.4 l-0.7 -8.6" stroke="#2e5a1e" stroke-width="1.2" opacity=".6"/><path d="M119.4 153.0 l-1.7 -7.6" stroke="#2e5a1e" stroke-width="1.2" opacity=".6"/><path d="M248.5 123.6 l-1.7 -6.3" stroke="#2e5a1e" stroke-width="1.2" opacity=".6"/><path d="M182.4 127.9 l1.9 -13.1" stroke="#2e5a1e" stroke-width="1.2" opacity=".6"/><path d="M326.0 124.6 l-1.7 -6.8" stroke="#2e5a1e" stroke-width="1.2" opacity=".6"/><path d="M164.5 149.0 l-0.2 -7.9" stroke="#2e5a1e" stroke-width="1.2" opacity=".6"/><path d="M137.6 144.1 l0.7 -12.0" stroke="#2e5a1e" stroke-width="1.2" opacity=".6"/><path d="M279.5 146.5 l-1.5 -12.7" stroke="#2e5a1e" stroke-width="1.2" opacity=".6"/><path d="M96.9 141.2 l-0.5 -11.9" stroke="#2e5a1e" stroke-width="1.2" opacity=".6"/><path d="M65.7 123.6 l-1.0 -7.2" stroke="#2e5a1e" stroke-width="1.2" opacity=".6"/><path d="M291.8 141.8 l-0.7 -9.2" stroke="#2e5a1e" stroke-width="1.2" opacity=".6"/><path d="M327.5 137.9 l-1.1 -12.5" stroke="#2e5a1e" stroke-width="1.2" opacity=".6"/><path d="M215.6 164.5 l-1.6 -9.8" stroke="#2e5a1e" stroke-width="1.2" opacity=".6"/><path d="M270.3 156.2 l1.7 -6.3" stroke="#2e5a1e" stroke-width="1.2" opacity=".6"/><circle cx="168" cy="135" r="3" fill="#d8304a"/><circle cx="142" cy="141" r="3" fill="#d8304a"/><circle cx="133" cy="160" r="3" fill="#d8304a"/><circle cx="152" cy="162" r="3" fill="#d8304a"/><circle cx="66" cy="115" r="3" fill="#d8304a"/><circle cx="100" cy="150" r="3" fill="#d8304a"/></svg><div class="badge b-dark" style="width:89.8px"></div><div class="t" style="left:240.60px;top:13.87px;font-size:20px;font-weight:400;color:#fff;letter-spacing:0.048px;">In Corso</div></div><div class="t" style="left:20.00px;top:186.58px;font-size:23.3px;font-weight:400;color:#333;letter-spacing:0.084px;">E-Signature course</div><div class="t" style="left:20.02px;top:354.77px;font-size:20px;font-weight:400;color:#666;letter-spacing:0.300px;transform:scaleX(0.8828);transform-origin:0 0;">KO</div><div class="div"></div><svg class="ficon" width="22" height="18" viewBox="0 0 22 18"><rect x="1" y="1" width="19" height="13.5" rx="1.5" fill="none" stroke="#616161" stroke-width="2"/><path d="M8.2 4.2 L14.2 7.8 L8.2 11.4Z" fill="#616161"/><rect x="7" y="15" width="6.8" height="2.2" fill="#616161"/></svg><div class="t" style="left:44.60px;top:420.07px;font-size:20px;font-weight:400;color:#333;letter-spacing:0.120px;">E-Learning</div><div class="dots"><i style="top:0"></i><i style="top:8px"></i><i style="top:16px"></i></div></div><div class="card" style="left:411px;top:452px;"><div class="img"><svg width="330" height="165" viewBox="0 0 330 165"><defs><linearGradient id="d_w" x1="0" y1="0" x2="1" y2="1"><stop offset="0" stop-color="#4e3828"/><stop offset=".5" stop-color="#644830"/><stop offset="1" stop-color="#5a4029"/></linearGradient></defs><rect width="330" height="165" fill="url(#d_w)"/><rect x="0" y="157.7" width="330" height="9.6" fill="#7a5a3e" opacity=".35"/><rect x="0" y="15.1" width="330" height="5.5" fill="#3e2c1e" opacity=".35"/><rect x="0" y="121.4" width="330" height="7.7" fill="#6e5036" opacity=".35"/><rect x="0" y="41.5" width="330" height="4.5" fill="#7a5a3e" opacity=".35"/><rect x="0" y="95.9" width="330" height="4.1" fill="#85643f" opacity=".35"/><rect x="0" y="105.3" width="330" height="8.6" fill="#6e5036" opacity=".35"/><rect x="0" y="89.8" width="330" height="6.1" fill="#6e5036" opacity=".35"/><rect x="0" y="148.7" width="330" height="9.1" fill="#6e5036" opacity=".35"/><rect x="0" y="76.7" width="330" height="5.2" fill="#85643f" opacity=".35"/><rect x="0" y="69.9" width="330" height="9.2" fill="#3e2c1e" opacity=".35"/><rect x="0" y="92.5" width="330" height="4.7" fill="#7a5a3e" opacity=".35"/><rect x="0" y="29.2" width="330" height="4.2" fill="#6e5036" opacity=".35"/><rect x="0" y="164.8" width="330" height="7.7" fill="#3e2c1e" opacity=".35"/><rect x="0" y="164.2" width="330" height="6.1" fill="#85643f" opacity=".35"/><path d="M0 103 L33 88 L50 110 L75 165 L0 165Z" fill="#dfe2e6"/><path d="M7 113 L53 118 L50 162 L0 160 L0 116Z" fill="#7b5a36"/><path d="M55 70 L72 82 L76 95 L68 110 L62 140 L58 142 L64 108 L60 85Z" fill="#4f7a5a"/><circle cx="66" cy="107" r="11" fill="#e9a3ab"/><circle cx="94" cy="120" r="11" fill="#e49aa4"/><circle cx="82" cy="96" r="6" fill="#8e8ad0"/><circle cx="99" cy="92" r="5" fill="#8a90d4"/><circle cx="76" cy="121" r="6" fill="#9a94cc"/><path d="M111 59 L219 59 L213 94 L118 94Z" fill="#1b1b1d"/><path d="M117 64 L214 64 L211 88 L121 88Z" fill="#cf7878"/><rect x="119" y="92" width="95" height="66" rx="2" fill="#d3d6d9"/><rect x="124" y="97" width="84" height="34" fill="#2a2a2c"/><rect x="125.5" y="98.5" width="4.8" height="4.6" fill="#0c0c0c"/><rect x="131.9" y="98.5" width="4.8" height="4.6" fill="#0c0c0c"/><rect x="138.3" y="98.5" width="4.8" height="4.6" fill="#0c0c0c"/><rect x="144.7" y="98.5" width="4.8" height="4.6" fill="#0c0c0c"/><rect x="151.1" y="98.5" width="4.8" height="4.6" fill="#0c0c0c"/><rect x="157.5" y="98.5" width="4.8" height="4.6" fill="#0c0c0c"/><rect x="163.9" y="98.5" width="4.8" height="4.6" fill="#0c0c0c"/><rect x="170.3" y="98.5" width="4.8" height="4.6" fill="#0c0c0c"/><rect x="176.7" y="98.5" width="4.8" height="4.6" fill="#0c0c0c"/><rect x="183.1" y="98.5" width="4.8" height="4.6" fill="#0c0c0c"/><rect x="189.5" y="98.5" width="4.8" height="4.6" fill="#0c0c0c"/><rect x="195.9" y="98.5" width="4.8" height="4.6" fill="#0c0c0c"/><rect x="202.3" y="98.5" width="4.8" height="4.6" fill="#0c0c0c"/><rect x="125.5" y="105.1" width="4.8" height="4.6" fill="#0c0c0c"/><rect x="131.9" y="105.1" width="4.8" height="4.6" fill="#0c0c0c"/><rect x="138.3" y="105.1" width="4.8" height="4.6" fill="#0c0c0c"/><rect x="144.7" y="105.1" width="4.8" height="4.6" fill="#0c0c0c"/><rect x="151.1" y="105.1" width="4.8" height="4.6" fill="#0c0c0c"/><rect x="157.5" y="105.1" width="4.8" height="4.6" fill="#0c0c0c"/><rect x="163.9" y="105.1" width="4.8" height="4.6" fill="#0c0c0c"/><rect x="170.3" y="105.1" width="4.8" height="4.6" fill="#0c0c0c"/><rect x="176.7" y="105.1" width="4.8" height="4.6" fill="#0c0c0c"/><rect x="183.1" y="105.1" width="4.8" height="4.6" fill="#0c0c0c"/><rect x="189.5" y="105.1" width="4.8" height="4.6" fill="#0c0c0c"/><rect x="195.9" y="105.1" width="4.8" height="4.6" fill="#0c0c0c"/><rect x="202.3" y="105.1" width="4.8" height="4.6" fill="#0c0c0c"/><rect x="125.5" y="111.7" width="4.8" height="4.6" fill="#0c0c0c"/><rect x="131.9" y="111.7" width="4.8" height="4.6" fill="#0c0c0c"/><rect x="138.3" y="111.7" width="4.8" height="4.6" fill="#0c0c0c"/><rect x="144.7" y="111.7" width="4.8" height="4.6" fill="#0c0c0c"/><rect x="151.1" y="111.7" width="4.8" height="4.6" fill="#0c0c0c"/><rect x="157.5" y="111.7" width="4.8" height="4.6" fill="#0c0c0c"/><rect x="163.9" y="111.7" width="4.8" height="4.6" fill="#0c0c0c"/><rect x="170.3" y="111.7" width="4.8" height="4.6" fill="#0c0c0c"/><rect x="176.7" y="111.7" width="4.8" height="4.6" fill="#0c0c0c"/><rect x="183.1" y="111.7" width="4.8" height="4.6" fill="#0c0c0c"/><rect x="189.5" y="111.7" width="4.8" height="4.6" fill="#0c0c0c"/><rect x="195.9" y="111.7" width="4.8" height="4.6" fill="#0c0c0c"/><rect x="202.3" y="111.7" width="4.8" height="4.6" fill="#0c0c0c"/><rect x="125.5" y="118.3" width="4.8" height="4.6" fill="#0c0c0c"/><rect x="131.9" y="118.3" width="4.8" height="4.6" fill="#0c0c0c"/><rect x="138.3" y="118.3" width="4.8" height="4.6" fill="#0c0c0c"/><rect x="144.7" y="118.3" width="4.8" height="4.6" fill="#0c0c0c"/><rect x="151.1" y="118.3" width="4.8" height="4.6" fill="#0c0c0c"/><rect x="157.5" y="118.3" width="4.8" height="4.6" fill="#0c0c0c"/><rect x="163.9" y="118.3" width="4.8" height="4.6" fill="#0c0c0c"/><rect x="170.3" y="118.3" width="4.8" height="4.6" fill="#0c0c0c"/><rect x="176.7" y="118.3" width="4.8" height="4.6" fill="#0c0c0c"/><rect x="183.1" y="118.3" width="4.8" height="4.6" fill="#0c0c0c"/><rect x="189.5" y="118.3" width="4.8" height="4.6" fill="#0c0c0c"/><rect x="195.9" y="118.3" width="4.8" height="4.6" fill="#0c0c0c"/><rect x="202.3" y="118.3" width="4.8" height="4.6" fill="#0c0c0c"/><rect x="125.5" y="124.9" width="4.8" height="4.6" fill="#0c0c0c"/><rect x="131.9" y="124.9" width="4.8" height="4.6" fill="#0c0c0c"/><rect x="138.3" y="124.9" width="4.8" height="4.6" fill="#0c0c0c"/><rect x="144.7" y="124.9" width="4.8" height="4.6" fill="#0c0c0c"/><rect x="151.1" y="124.9" width="4.8" height="4.6" fill="#0c0c0c"/><rect x="157.5" y="124.9" width="4.8" height="4.6" fill="#0c0c0c"/><rect x="163.9" y="124.9" width="4.8" height="4.6" fill="#0c0c0c"/><rect x="170.3" y="124.9" width="4.8" height="4.6" fill="#0c0c0c"/><rect x="176.7" y="124.9" width="4.8" height="4.6" fill="#0c0c0c"/><rect x="183.1" y="124.9" width="4.8" height="4.6" fill="#0c0c0c"/><rect x="189.5" y="124.9" width="4.8" height="4.6" fill="#0c0c0c"/><rect x="195.9" y="124.9" width="4.8" height="4.6" fill="#0c0c0c"/><rect x="202.3" y="124.9" width="4.8" height="4.6" fill="#0c0c0c"/><rect x="150" y="133" width="35" height="22" fill="#dcdfe2"/><path d="M130 165 L134 150 L145 140 L158 141 L163 150 L160 165Z" fill="#e8c4b4"/><circle cx="249" cy="143" r="14" fill="#d9b7a8"/><circle cx="249" cy="143" r="10.5" fill="#f1e6dc"/><path d="M256 165 L258 152 L268 147 L275 158 L274 165Z" fill="#e6c2b2"/><g transform="translate(300 135) rotate(-30)"><rect x="-12" y="-27" width="24" height="54" rx="4" fill="#f0f0f0"/><rect x="-9" y="-20" width="18" height="40" fill="#0a0a0a"/></g></svg><div class="badge b-orange" style="width:137.4px"></div><div class="t" style="left:193.00px;top:13.87px;font-size:20px;font-weight:400;color:#333;letter-spacing:0.237px;">Lista d&#39;Attesa</div></div><div class="t" style="left:19.50px;top:186.58px;font-size:23.3px;font-weight:400;color:#333;letter-spacing:0.230px;">Localization + UX the key</div><div class="t" style="left:20.50px;top:214.58px;font-size:23.3px;font-weight:400;color:#333;letter-spacing:0.493px;">to a great global</div><div class="t" style="left:20.50px;top:242.58px;font-size:23.3px;font-weight:400;color:#333;letter-spacing:0.565px;">experience</div><div class="t" style="left:20.31px;top:354.77px;font-size:20px;font-weight:400;color:#666;letter-spacing:0.300px;transform:scaleX(0.8931);transform-origin:0 0;">EN</div><div class="div"></div><svg class="ficon" width="22" height="18" viewBox="0 0 22 18"><rect x="1" y="1" width="19" height="13.5" rx="1.5" fill="none" stroke="#616161" stroke-width="2"/><path d="M8.2 4.2 L14.2 7.8 L8.2 11.4Z" fill="#616161"/><rect x="7" y="15" width="6.8" height="2.2" fill="#616161"/></svg><div class="t" style="left:44.60px;top:420.07px;font-size:20px;font-weight:400;color:#333;letter-spacing:0.120px;">E-Learning</div><div class="dots"><i style="top:0"></i><i style="top:8px"></i><i style="top:16px"></i></div></div><div class="card" style="left:780px;top:452px;"><div class="img"><svg width="330" height="165" viewBox="0 0 330 165"><defs><linearGradient id="w3_bg" x1="0" y1="0" x2=".35" y2="1"><stop offset="0" stop-color="#3c5fa4"/><stop offset=".5" stop-color="#4a6eb4"/><stop offset="1" stop-color="#6b94d4"/></linearGradient>
<radialGradient id="w3_bub" cx=".42" cy=".38" r=".62"><stop offset="0" stop-color="#a6b0dc"/><stop offset=".6" stop-color="#8e9ed2"/><stop offset="1" stop-color="#b0bae2"/></radialGradient>
<filter id="w3_bl" x="-20%" y="-20%" width="140%" height="140%"><feGaussianBlur stdDeviation="3"/></filter>
<clipPath id="w3_cp"><circle cx="217" cy="69" r="75"/></clipPath></defs><rect width="330" height="165" fill="url(#w3_bg)"/><g filter="url(#w3_bl)"><ellipse cx="15" cy="2" rx="40" ry="9" fill="#1c3a7a"/><ellipse cx="60" cy="72" rx="70" ry="18" fill="#3a5898" opacity=".7"/><ellipse cx="40" cy="40" rx="45" ry="12" fill="#5a80c4" opacity=".6"/><ellipse cx="40" cy="158" rx="65" ry="22" fill="#7ca4e0" opacity=".9"/><ellipse cx="115" cy="125" rx="30" ry="18" fill="#5a82c8" opacity=".6"/></g><ellipse cx="92" cy="1" rx="18" ry="7" fill="#b4a89a"/><circle cx="217" cy="69" r="76" fill="url(#w3_bub)"/><g clip-path="url(#w3_cp)"><g filter="url(#w3_bl)"><ellipse cx="185" cy="60" rx="35" ry="25" fill="#c4cae8" opacity=".8"/><ellipse cx="240" cy="45" rx="30" ry="20" fill="#bcc4e6" opacity=".7"/><ellipse cx="180" cy="110" rx="32" ry="18" fill="#5674bc" opacity=".85"/><ellipse cx="265" cy="75" rx="20" ry="14" fill="#5a76bc" opacity=".8"/><ellipse cx="235" cy="100" rx="22" ry="10" fill="#a8b4e0" opacity=".7"/></g></g><path d="M147 32 A76 76 0 0 0 168 126" fill="none" stroke="#eef0fa" stroke-width="2.6" opacity=".9"/><path d="M108 165 Q165 130 230 118 Q290 110 330 126 L330 165Z" fill="#9aa2cc"/><path d="M115 165 Q170 132 235 122 M150 165 Q205 135 300 128 M215 165 Q262 140 330 140 M240 119 Q292 124 330 150 M270 165 Q300 150 330 158" fill="none" stroke="#3a4668" stroke-width="2.2" opacity=".8"/><rect width="330" height="165" fill="#23262f" opacity=".56"/></svg><div class="lockc"><svg width="64" height="64" viewBox="0 0 64 64" style="position:absolute;left:0;top:0"><path d="M25.5 27 V22.6 a6.5 6.5 0 0 1 13 0 V27" fill="none" stroke="#fff" stroke-width="3.4"/><rect x="19" y="25.5" width="26.5" height="22.5" rx="3" fill="#fff"/><circle cx="32" cy="36.5" r="3" fill="#333"/></svg></div><div class="badge b-dark" style="width:89.8px"></div><div class="t" style="left:240.60px;top:13.87px;font-size:20px;font-weight:400;color:#fff;letter-spacing:0.048px;">In Corso</div></div><div class="t" style="left:18.50px;top:186.58px;font-size:23.3px;font-weight:400;color:#333;letter-spacing:0.376px;">Getting Ready for Spring</div><div class="t" style="left:19.30px;top:214.58px;font-size:23.3px;font-weight:400;color:#333;letter-spacing:0.472px;">Holidays</div><div class="t" style="left:19.30px;top:249.07px;font-size:20px;font-weight:400;color:#666;letter-spacing:0.077px;">Iscrizione Scaduta</div><div class="t" style="left:19.81px;top:354.77px;font-size:20px;font-weight:400;color:#666;letter-spacing:0.300px;transform:scaleX(0.8931);transform-origin:0 0;">EN</div><div class="div"></div><svg class="ficon" style="left:14px;top:419px" width="24" height="22" viewBox="0 0 24 22"><path d="M2.25 15.4 V3.15 Q2.25 2.15 3.25 2.15 H19.75 Q20.75 2.15 20.75 3.15 V15.4" fill="none" stroke="#606060" stroke-width="1.9"/><rect x="0.1" y="17.4" width="22.8" height="2" rx="1" fill="#606060"/><rect x="10.2" y="14.9" width="6.8" height="2.6" fill="#606060"/></svg><div class="t" style="left:44.80px;top:420.07px;font-size:20px;font-weight:400;color:#333;letter-spacing:0.289px;">ILT (Instructor-Led...</div><div class="dots"><i style="top:0"></i><i style="top:8px"></i><i style="top:16px"></i></div></div><div class="card" style="left:1148px;top:452px;"><div class="img"><svg width="330" height="165" viewBox="0 0 330 165"><defs><linearGradient id="w4_bg" x1="0" y1="0" x2=".35" y2="1"><stop offset="0" stop-color="#3c5fa4"/><stop offset=".5" stop-color="#4a6eb4"/><stop offset="1" stop-color="#6b94d4"/></linearGradient>
<radialGradient id="w4_bub" cx=".42" cy=".38" r=".62"><stop offset="0" stop-color="#a6b0dc"/><stop offset=".6" stop-color="#8e9ed2"/><stop offset="1" stop-color="#b0bae2"/></radialGradient>
<filter id="w4_bl" x="-20%" y="-20%" width="140%" height="140%"><feGaussianBlur stdDeviation="3"/></filter>
<clipPath id="w4_cp"><circle cx="217" cy="69" r="75"/></clipPath></defs><rect width="330" height="165" fill="url(#w4_bg)"/><g filter="url(#w4_bl)"><ellipse cx="15" cy="2" rx="40" ry="9" fill="#1c3a7a"/><ellipse cx="60" cy="72" rx="70" ry="18" fill="#3a5898" opacity=".7"/><ellipse cx="40" cy="40" rx="45" ry="12" fill="#5a80c4" opacity=".6"/><ellipse cx="40" cy="158" rx="65" ry="22" fill="#7ca4e0" opacity=".9"/><ellipse cx="115" cy="125" rx="30" ry="18" fill="#5a82c8" opacity=".6"/></g><ellipse cx="92" cy="1" rx="18" ry="7" fill="#b4a89a"/><circle cx="217" cy="69" r="76" fill="url(#w4_bub)"/><g clip-path="url(#w4_cp)"><g filter="url(#w4_bl)"><ellipse cx="185" cy="60" rx="35" ry="25" fill="#c4cae8" opacity=".8"/><ellipse cx="240" cy="45" rx="30" ry="20" fill="#bcc4e6" opacity=".7"/><ellipse cx="180" cy="110" rx="32" ry="18" fill="#5674bc" opacity=".85"/><ellipse cx="265" cy="75" rx="20" ry="14" fill="#5a76bc" opacity=".8"/><ellipse cx="235" cy="100" rx="22" ry="10" fill="#a8b4e0" opacity=".7"/></g></g><path d="M147 32 A76 76 0 0 0 168 126" fill="none" stroke="#eef0fa" stroke-width="2.6" opacity=".9"/><path d="M108 165 Q165 130 230 118 Q290 110 330 126 L330 165Z" fill="#9aa2cc"/><path d="M115 165 Q170 132 235 122 M150 165 Q205 135 300 128 M215 165 Q262 140 330 140 M240 119 Q292 124 330 150 M270 165 Q300 150 330 158" fill="none" stroke="#3a4668" stroke-width="2.2" opacity=".8"/></svg><div class="badge b-dark" style="width:89.8px"></div><div class="t" style="left:240.60px;top:13.87px;font-size:20px;font-weight:400;color:#fff;letter-spacing:0.048px;">In Corso</div></div><div class="t" style="left:19.80px;top:186.58px;font-size:23.3px;font-weight:400;color:#333;letter-spacing:0.957px;">Wintering</div><div class="t" style="left:20.31px;top:354.77px;font-size:20px;font-weight:400;color:#666;letter-spacing:0.300px;transform:scaleX(0.8931);transform-origin:0 0;">EN</div><div class="div"></div><svg class="ficon" width="22" height="18" viewBox="0 0 22 18"><rect x="1" y="1" width="19" height="13.5" rx="1.5" fill="none" stroke="#616161" stroke-width="2"/><path d="M8.2 4.2 L14.2 7.8 L8.2 11.4Z" fill="#616161"/><rect x="7" y="15" width="6.8" height="2.2" fill="#616161"/></svg><div class="t" style="left:44.60px;top:420.07px;font-size:20px;font-weight:400;color:#333;letter-spacing:0.120px;">E-Learning</div><div class="dots"><i style="top:0"></i><i style="top:8px"></i><i style="top:16px"></i></div></div><div class="card" style="left:1517px;top:452px;"><div class="img"><svg width="330" height="165" viewBox="0 0 330 165"><defs><linearGradient id="c_sh" x1="0" y1="0" x2="1" y2="1"><stop offset="0" stop-color="#8e8a88"/><stop offset=".6" stop-color="#d8d8d8"/><stop offset="1" stop-color="#ffffff"/></linearGradient></defs><rect width="330" height="165" fill="#ffffff"/><path d="M0 40 L152 165 L0 165Z" fill="url(#c_sh)"/><path d="M0 0 L100 0 L330 150 L330 165 L152 165 L0 40Z" fill="#c8aaa1"/><path d="M0 40 L152 165" stroke="#6a5a55" stroke-width="2"/><path d="M105 0 L170 0 L172 25 L140 28 L110 10Z" fill="#8a7a6a"/><path d="M170 0 L215 0 L228 30 L215 55 L180 45 L172 25Z" fill="#3a5a9a"/><path d="M222 50 L270 45 L285 75 L278 105 L240 100 L220 80Z" fill="#e8a020"/><circle cx="255" cy="48" r="11" fill="#f0c8a8"/><path d="M275 65 L292 80 L290 100 L280 105Z" fill="#2a4a90"/><path d="M285 110 L305 105 L325 125 L320 150 L300 145 L285 125Z" fill="#8aa8b0"/><path d="M292 108 L318 118 L312 132 L290 125Z" fill="#e0187a"/><circle cx="316" cy="97" r="13" fill="#f2d0b8"/><path d="M146 45 L182 65 L172 80 L138 57Z" fill="#ffffff"/><path d="M210 82 L238 97 L228 106 L202 91Z" fill="#ffffff"/><path d="M100 7 L135 25 L125 33 L92 15Z" fill="#ffffff"/><path d="M275 128 L298 140 L290 148 L268 136Z" fill="#ffffff"/><path d="M28 60 L60 48 L78 70 L95 108 L88 115 L68 100 L58 125 L55 165 L15 165 L14 120 L20 85Z" fill="#8c8e8a"/><path d="M80 68 L122 95 L108 102 L75 80Z" fill="#ffffff"/><ellipse cx="72" cy="42" rx="15" ry="20" fill="#f2c9ac"/><path d="M52 32 Q58 17 78 20 L84 24 L70 34 L62 48 L55 46Z" fill="#8a6a44"/></svg><div class="badge b-green" style="width:125.2px"></div><div class="t" style="left:205.20px;top:13.87px;font-size:20px;font-weight:400;color:#fff;letter-spacing:0.519px;">Non Iniziato</div></div><div class="t" style="left:19.10px;top:186.58px;font-size:23.3px;font-weight:400;color:#333;letter-spacing:-0.100px;">Age Diversity - ENG</div><div class="t" style="left:19.81px;top:354.77px;font-size:20px;font-weight:400;color:#666;letter-spacing:0.300px;transform:scaleX(0.8931);transform-origin:0 0;">EN</div><div class="div"></div><svg class="ficon" width="22" height="18" viewBox="0 0 22 18"><rect x="1" y="1" width="19" height="13.5" rx="1.5" fill="none" stroke="#616161" stroke-width="2"/><path d="M8.2 4.2 L14.2 7.8 L8.2 11.4Z" fill="#616161"/><rect x="7" y="15" width="6.8" height="2.2" fill="#616161"/></svg><div class="t" style="left:44.60px;top:420.07px;font-size:20px;font-weight:400;color:#333;letter-spacing:0.120px;">E-Learning</div><div class="dots"><i style="top:0"></i><i style="top:8px"></i><i style="top:16px"></i></div></div><div class="card" style="left:43px;top:952px;"><div class="img"><svg width="330" height="165" viewBox="0 0 330 165"><defs></defs><rect width="330" height="165" fill="#4ec3cf"/><text x="10" y="42" font-family="Liberation Sans" font-weight="400" font-size="34" fill="#1b2a31" stroke="#1b2a31" stroke-width="0.9" textLength="238" lengthAdjust="spacingAndGlyphs">INTELLIGENZA</text><text x="9" y="77.2" font-family="Liberation Sans" font-weight="400" font-size="34" fill="#1b2a31" stroke="#1b2a31" stroke-width="0.9" textLength="202" lengthAdjust="spacingAndGlyphs">ARTIFICIALE</text><path d="M310 45 L311 62 L330 80" fill="none" stroke="#1b2a31" stroke-width="3.6" stroke-linecap="round"/><path d="M326 25 L326 60 L330 64" fill="none" stroke="#1b2a31" stroke-width="3.6" stroke-linecap="round"/><path d="M292 62 L292 75 L330 118" fill="none" stroke="#1b2a31" stroke-width="3.6" stroke-linecap="round"/><path d="M317 90 L330 100" fill="none" stroke="#1b2a31" stroke-width="3.6" stroke-linecap="round"/><path d="M287 100 L295 105 L305 105 L330 130" fill="none" stroke="#1b2a31" stroke-width="3.6" stroke-linecap="round"/><path d="M303 130 L313 130 L317 136 L317 165" fill="none" stroke="#1b2a31" stroke-width="3.6" stroke-linecap="round"/><path d="M330 140 L328 165" fill="none" stroke="#1b2a31" stroke-width="3.6" stroke-linecap="round"/><circle cx="310" cy="45" r="5" fill="#1b2a31"/><circle cx="292" cy="62" r="5" fill="#1b2a31"/><circle cx="317" cy="90" r="5" fill="#1b2a31"/><circle cx="287" cy="100" r="5" fill="#1b2a31"/><circle cx="303" cy="130" r="5" fill="#1b2a31"/></svg><div class="badge b-green" style="width:125.2px"></div><div class="t" style="left:205.20px;top:13.87px;font-size:20px;font-weight:400;color:#fff;letter-spacing:0.519px;">Non Iniziato</div></div><div class="t" style="left:18.00px;top:186.58px;font-size:23.3px;font-weight:400;color:#333;letter-spacing:0.628px;">Intelligenza artificiale e big</div><div class="t" style="left:19.50px;top:214.58px;font-size:23.3px;font-weight:400;color:#333;letter-spacing:0.582px;">data, orizzonti per</div><div class="t" style="left:19.00px;top:242.58px;font-size:23.3px;font-weight:400;color:#333;letter-spacing:0.670px;">l&#39;eLearning</div></div><div class="card" style="left:411px;top:952px;"><div class="img"><svg width="330" height="165" viewBox="0 0 330 165"><defs></defs><rect width="330" height="165" fill="#176b6c"/></svg><div class="lockc"><svg width="64" height="64" viewBox="0 0 64 64" style="position:absolute;left:0;top:0"><path d="M25.5 27 V22.6 a6.5 6.5 0 0 1 13 0 V27" fill="none" stroke="#fff" stroke-width="3.4"/><rect x="19" y="25.5" width="26.5" height="22.5" rx="3" fill="#fff"/><circle cx="32" cy="36.5" r="3" fill="#333"/></svg></div><div class="badge b-orange" style="width:137.4px"></div><div class="t" style="left:193.00px;top:13.87px;font-size:20px;font-weight:400;color:#333;letter-spacing:0.237px;">Lista d&#39;Attesa</div></div><div class="t" style="left:19.70px;top:186.58px;font-size:23.3px;font-weight:400;color:#333;letter-spacing:0.511px;">Adapting to change</div><div class="t" style="left:19.50px;top:221.07px;font-size:20px;font-weight:400;color:#666;letter-spacing:0.432px;">Corso in manutenzione</div></div><div class="card" style="left:780px;top:952px;"><div class="img"><svg width="330" height="165" viewBox="0 0 330 165"><defs><linearGradient id="b_sky" x1="0" y1="0" x2="0" y2="1"><stop offset="0" stop-color="#5d9c9a"/><stop offset=".55" stop-color="#789c94"/><stop offset="1" stop-color="#8e9a8e"/></linearGradient>
<linearGradient id="b_sea" x1="0" y1="0" x2="0" y2="1"><stop offset="0" stop-color="#1f6466"/><stop offset=".5" stop-color="#2d7476"/><stop offset="1" stop-color="#268a86"/></linearGradient></defs><rect width="330" height="116" fill="url(#b_sky)"/><rect y="115" width="330" height="50" fill="url(#b_sea)"/><rect y="115" width="330" height="5" fill="#1d5a5c"/><path d="M45 121 Q90 117 150 121" stroke="#d8ece8" stroke-width="2.2" fill="none"/><ellipse cx="28" cy="15" rx="40" ry="25" fill="#8e9a7e" opacity=".8"/><rect x="0" y="30" width="4" height="135" fill="#6a5030"/><rect x="12" y="40" width="20" height="125" fill="#5c4026"/><rect x="32" y="85" width="14" height="80" fill="#a0804e"/><path d="M0 50 Q20 52 28 60 L26 68 L0 65Z" fill="#b89878"/><path d="M0 125 L30 150 L40 165 L0 165Z" fill="#a07830"/><rect x="228" y="118" width="12" height="47" fill="#9a7c4e"/><rect x="238" y="80" width="16" height="85" fill="#a08450"/><rect x="256" y="43" width="20" height="122" fill="#a5864e"/><rect x="280" y="45" width="24" height="120" fill="#9d7e4a"/><rect x="312" y="65" width="18" height="100" fill="#4e3e2a"/><path d="M262 58 Q275 58 282 66 L280 74 L262 70Z" fill="#c8b49a"/><ellipse cx="300" cy="70" rx="22" ry="25" fill="#7a8a5a" opacity=".7"/><ellipse cx="310" cy="10" rx="30" ry="18" fill="#6a7a56" opacity=".8"/></svg><div class="badge b-green" style="width:125.2px"></div><div class="t" style="left:205.20px;top:13.87px;font-size:20px;font-weight:400;color:#fff;letter-spacing:0.519px;">Non Iniziato</div></div><div class="t" style="left:18.80px;top:186.58px;font-size:23.3px;font-weight:400;color:#333;letter-spacing:0.318px;">Summer Vibes</div></div><div class="card" style="left:1148px;top:952px;"><div class="img"><svg width="330" height="165" viewBox="0 0 330 165"><defs></defs><rect width="330" height="165" fill="#c8004a"/><path d="M148 67 h34 a1.5 1.5 0 0 1 1.5 1.5 v26 h-4 v-23.5 h-29 v23.5 h-4 v-26 a1.5 1.5 0 0 1 1.5 -1.5Z" fill="#fff"/><rect x="143.5" y="94" width="43" height="5" rx="2" fill="#fff"/><rect x="163" y="89.8" width="13" height="4.5" fill="#fff"/></svg><div class="badge b-dark" style="width:89.8px"></div><div class="t" style="left:240.60px;top:13.87px;font-size:20px;font-weight:400;color:#fff;letter-spacing:0.048px;">In Corso</div></div><div class="t" style="left:18.20px;top:186.58px;font-size:23.3px;font-weight:400;color:#333;letter-spacing:0.707px;">Impara a volare</div></div><div class="card" style="left:1517px;top:952px;"><div class="img"><svg width="330" height="165" viewBox="0 0 330 165"><defs><filter id="c_bl" x="-10%" y="-10%" width="120%" height="120%"><feGaussianBlur stdDeviation="1"/></filter></defs><rect width="330" height="165" fill="#221d18"/><g filter="url(#c_bl)"><rect x="0" y="0" width="60" height="165" fill="#3c2a1a"/><rect x="0" y="0" width="46" height="22" fill="#3a4630"/><rect x="0" y="40" width="42" height="112" fill="#4c4a40"/><rect x="0" y="110" width="42" height="42" fill="#6e6e66"/><rect x="60" y="0" width="52" height="165" fill="#0e0c0a"/><rect x="100" y="0" width="45" height="80" fill="#4a3624"/><rect x="160" y="0" width="170" height="92" fill="#46503c"/><ellipse cx="250" cy="40" rx="55" ry="35" fill="#56624a"/><ellipse cx="190" cy="20" rx="25" ry="18" fill="#5c5c56"/><rect x="196" y="92" width="134" height="45" fill="#1a1612"/><path d="M118 165 L115 110 L125 80 L150 70 L180 85 L200 110 L195 140 L170 150 L140 165Z" fill="#84766a"/><ellipse cx="150" cy="58" rx="25" ry="25" fill="#16110d"/><path d="M205 165 L210 100 L235 70 L270 65 L300 90 L305 140 L290 165Z" fill="#988470"/><ellipse cx="245" cy="65" rx="18" ry="22" fill="#5a3e2a"/><path d="M240 85 L255 80 L262 130 L250 135Z" fill="#181410"/><path d="M133 138 L330 138 L330 165 L130 165Z" fill="#94948e"/><path d="M195 132 L270 130 L275 150 L215 148Z" fill="#7a6450"/></g></svg><div class="lockc"><svg width="64" height="64" viewBox="0 0 64 64" style="position:absolute;left:0;top:0"><path d="M25.5 27 V22.6 a6.5 6.5 0 0 1 13 0 V27" fill="none" stroke="#fff" stroke-width="3.4"/><rect x="19" y="25.5" width="26.5" height="22.5" rx="3" fill="#fff"/><circle cx="32" cy="36.5" r="3" fill="#333"/></svg></div><div class="badge b-dark" style="width:122.2px"></div><div class="t" style="left:208.20px;top:13.87px;font-size:20px;font-weight:400;color:#fff;letter-spacing:0.672px;">Completato</div></div><div class="t" style="left:19.10px;top:186.58px;font-size:23.3px;font-weight:400;color:#333;letter-spacing:0.590px;">Apprendre le Norvégien</div><div class="t" style="left:19.10px;top:221.07px;font-size:20px;font-weight:400;color:#d0202e;letter-spacing:0.072px;">Scaduto</div></div><svg class="abs" style="left:185px;top:678px;z-index:10" width="45" height="44" viewBox="0 0 45 44">
<defs><filter id="csh" x="-20%" y="-20%" width="140%" height="140%"><feGaussianBlur stdDeviation="0.8"/></filter></defs>
<path transform="translate(0.6 1)" filter="url(#csh)" opacity=".45" d="M15.5 22.5 L13.3 9 Q13.5 6.3 15.8 6.3 Q18.2 6.5 19 10 L20.2 19 Q20.5 14.8 23 14.8 Q25.5 14.8 26 19.5 Q26.5 14.8 29.3 14.8 Q31.5 15 32 19.5 Q33 16.5 35 16.8 Q37 17.5 36.8 20 L36.5 27 Q36 31 33.5 33.5 L32.8 37.2 L29.2 37.2 L27 34.5 L25 37.2 L18.8 37.2 L18.2 35 L8.5 24 Q7.2 21 9 19.5 Q11 18 13 19.5 Z" fill="#000"/>
<path d="M15.5 22.5 L13.3 9 Q13.5 6.3 15.8 6.3 Q18.2 6.5 19 10 L20.2 19 Q20.5 14.8 23 14.8 Q25.5 14.8 26 19.5 Q26.5 14.8 29.3 14.8 Q31.5 15 32 19.5 Q33 16.5 35 16.8 Q37 17.5 36.8 20 L36.5 27 Q36 31 33.5 33.5 L32.8 37.2 L29.2 37.2 L27 34.5 L25 37.2 L18.8 37.2 L18.2 35 L8.5 24 Q7.2 21 9 19.5 Q11 18 13 19.5 Z" fill="#fff" stroke="#000" stroke-width="1.3" stroke-linejoin="round"/>
<path d="M22 24.5 V31.5 M26 24.5 V31.5 M30 24.5 V31.5" stroke="#000" stroke-width="1.3"/>
</svg>
</body></html>
